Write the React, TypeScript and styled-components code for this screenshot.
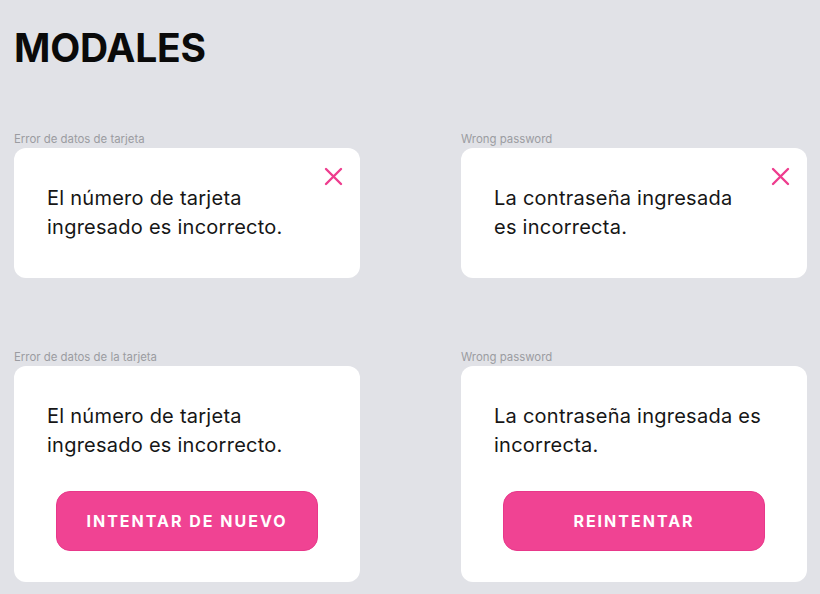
import styled, { createGlobalStyle } from "styled-components";

const GlobalStyle = createGlobalStyle`
  html, body {
    margin: 0;
    padding: 0;
    background: #e1e2e7;
    font-family: Inter, "Noto Sans", sans-serif;
  }
`;

const Page = styled.div`
  padding: 24px 14px 0 14px;
  min-height: 570px;
`;

const Title = styled.h1`
  margin: 0 0 60px 0;
  font-size: 39px;
  line-height: 48px;
  font-weight: 700;
  color: #0a0a0a;
  letter-spacing: -0.2px;
`;

const Grid = styled.div`
  display: grid;
  grid-template-columns: 346px 346px;
  column-gap: 101px;
  row-gap: 72px;
`;

const Block = styled.div`
  display: flex;
  flex-direction: column;
  gap: 2px;
`;

const Label = styled.div`
  font-size: 11.4px;
  line-height: 14px;
  color: #9b9ca1;
`;

const Card = styled.div<{ $closable?: boolean }>`
  position: relative;
  background: #fff;
  border-radius: 12px;
  padding: 36px ${(p) => (p.$closable ? "60px" : "33px")} 31px 33px;
  display: flex;
  flex-direction: column;
`;

const Message = styled.p`
  margin: 0 0 5px 0;
  font-size: 20px;
  line-height: 29px;
  color: #161616;
  letter-spacing: 0.25px;
`;

const CloseButton = styled.button`
  position: absolute;
  top: 19px;
  right: 17px;
  width: 19px;
  height: 19px;
  padding: 0;
  border: none;
  background: none;
  cursor: pointer;
  display: flex;
`;

const ActionButton = styled.button`
  align-self: center;
  margin-top: 26px;
  width: 262px;
  height: 60px;
  border-radius: 14px;
  border: 1px solid #e8388a;
  background: #f04393;
  color: #fff;
  font-family: Inter, "Noto Sans", sans-serif;
  font-weight: 700;
  font-size: 16px;
  letter-spacing: 2px;
  cursor: pointer;
`;

const CloseIcon = () => (
  <svg width="19" height="19" viewBox="0 0 19 19">
    <path d="M2 2 L17 17 M17 2 L2 17" stroke="#ee3d8e" strokeWidth="2.4" strokeLinecap="round" />
  </svg>
);

const modals = [
  { label: "Error de datos de tarjeta", text: "El número de tarjeta ingresado es incorrecto.", closable: true },
  { label: "Wrong password", text: "La contraseña ingresada es incorrecta.", closable: true },
  { label: "Error de datos de la tarjeta", text: "El número de tarjeta ingresado es incorrecto.", action: "INTENTAR DE NUEVO" },
  { label: "Wrong password", text: "La contraseña ingresada es incorrecta.", action: "REINTENTAR" },
];

export default function App() {
  return (
    <Page>
      <GlobalStyle />
      <Title>MODALES</Title>
      <Grid>
        {modals.map((m, idx) => (
          <Block key={idx}>
            <Label>{m.label}</Label>
            <Card $closable={m.closable}>
              {m.closable && (
                <CloseButton aria-label="Cerrar">
                  <CloseIcon />
                </CloseButton>
              )}
              <Message>{m.text}</Message>
              {m.action && <ActionButton>{m.action}</ActionButton>}
            </Card>
          </Block>
        ))}
      </Grid>
    </Page>
  );
}
